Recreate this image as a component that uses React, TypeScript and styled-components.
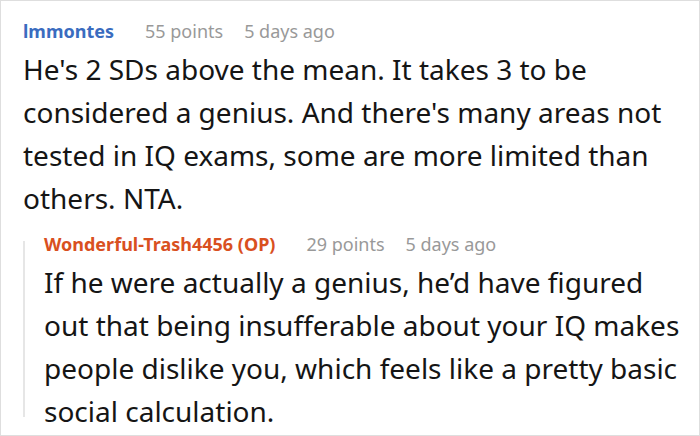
import React from "react";
import styled, { createGlobalStyle } from "styled-components";

const GlobalStyle = createGlobalStyle`
  html, body {
    margin: 0;
    padding: 0;
    background: #fff;
  }
  body {
    font-family: "Noto Sans", "Open Sans", sans-serif;
  }
`;

type CommentData = {
  author: string;
  isOp?: boolean;
  points: number;
  ago: string;
  text: string;
};

const parent: CommentData = {
  author: "lmmontes",
  points: 55,
  ago: "5 days ago",
  text:
    "He's 2 SDs above the mean. It takes 3 to be considered a genius. And there's many areas not tested in IQ exams, some are more limited than others. NTA.",
};

const reply: CommentData = {
  author: "Wonderful-Trash4456 (OP)",
  isOp: true,
  points: 29,
  ago: "5 days ago",
  text:
    "If he were actually a genius, he\u2019d have figured out that being insufferable about your IQ makes people dislike you, which feels like a pretty basic social calculation.",
};

const Comment: React.FC<{ data: CommentData }> = ({ data }) => (
  <div>
    <Meta>
      <Author isOp={!!data.isOp}>{data.author}</Author>
      <Stat>{data.points} points</Stat>
      <Stat>{data.ago}</Stat>
    </Meta>
    <Body>{data.text}</Body>
  </div>
);

const App: React.FC = () => {
  return (
    <>
      <GlobalStyle />
      <Frame>
        <Comment data={parent} />
        <Reply>
          <Comment data={reply} />
        </Reply>
      </Frame>
    </>
  );
};

const Frame = styled.div`
  box-sizing: border-box;
  width: 700px;
  height: 436px;
  border: 1px solid #dedede;
  padding: 17px 8px 0 22px;
  overflow: hidden;
`;

const Meta = styled.div`
  display: flex;
  align-items: baseline;
  gap: 21px;
  height: 26px;
  line-height: 26px;
  font-size: 18px;
`;

const Author = styled.span<{ isOp: boolean }>`
  font-weight: 700;
  margin-right: 10px;
  color: ${({ isOp }) => (isOp ? "#d9501f" : "#3a6cbf")};
`;

const Stat = styled.span`
  color: #999;
`;

const Body = styled.p`
  margin: 4px 0 0;
  font-size: 28px;
  line-height: 43px;
  color: #151515;
`;

// 返信は左に縦線を引いてインデント
const Reply = styled.div`
  position: relative;
  margin-top: 11px;
  padding-left: 21px;

  &::before {
    content: "";
    position: absolute;
    left: 0;
    top: 10px;
    bottom: 16px;
    width: 2px;
    background: #e6e6e6;
  }
`;

export default App;
